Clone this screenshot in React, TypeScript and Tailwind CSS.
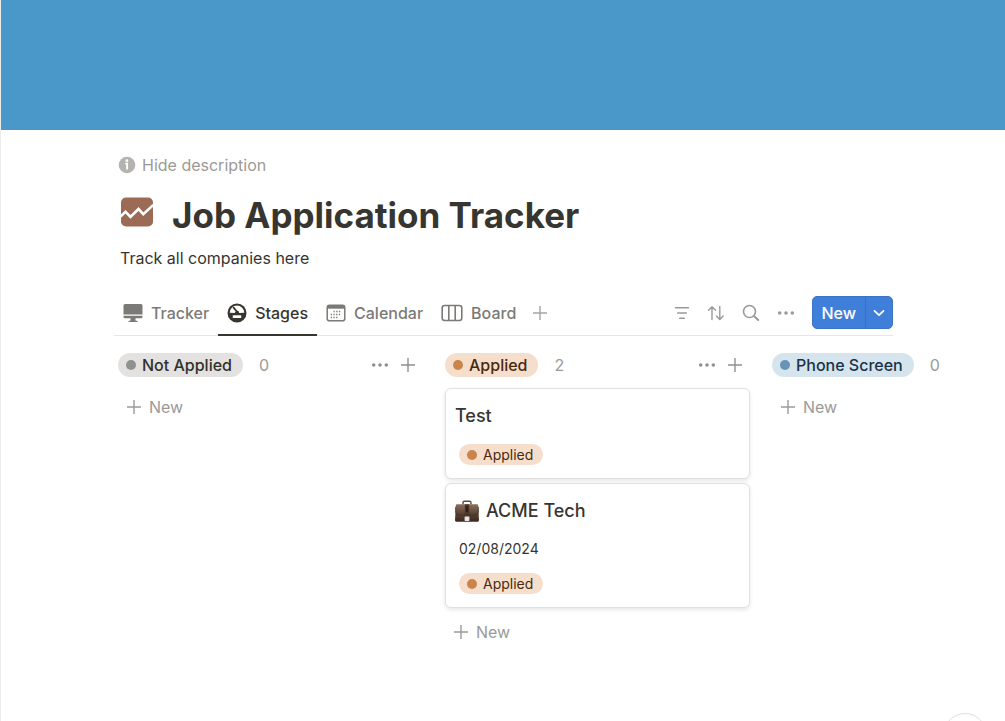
import type { ReactNode } from "react";

function Plus({ className = "size-4" }: { className?: string }) {
  return (
    <svg viewBox="0 0 16 16" className={className} fill="none" stroke="currentColor" strokeWidth="1.4" aria-hidden="true">
      <path d="M8 1v14M1 8h14" />
    </svg>
  );
}

function Dots() {
  return (
    <svg viewBox="0 0 18 6" className="h-1.5 w-4.5" fill="currentColor" aria-hidden="true">
      <circle cx="2.7" cy="3" r="1.8" />
      <circle cx="9" cy="3" r="1.8" />
      <circle cx="15.3" cy="3" r="1.8" />
    </svg>
  );
}

function InfoIcon() {
  return (
    <svg viewBox="0 0 18 18" className="size-4.5" aria-hidden="true">
      <circle cx="9" cy="9" r="8.3" fill="#b4b3b0" />
      <circle cx="8.9" cy="4.7" r="1.4" fill="#fff" />
      <path d="M7.2 7.6h1.9v6" fill="none" stroke="#fff" strokeWidth="1.9" />
    </svg>
  );
}

function ChartIcon() {
  return (
    <svg viewBox="0 0 34 30" className="h-[30px] w-[34px]" aria-hidden="true">
      <rect x="1" y="0.5" width="32" height="29" rx="5" fill="#9b6b55" />
      <path d="M0.5 19.5l5-4.7 5 5.2 8-8 4.8 5.2 10-9.2" fill="none" stroke="#fff" strokeWidth="2.6" />
    </svg>
  );
}

function MonitorIcon() {
  return (
    <svg viewBox="0 0 20 20" className="size-5" fill="currentColor" aria-hidden="true">
      <path d="M2 1h16a1.5 1.5 0 0 1 1.5 1.5V11.500H.5V2.500A1.5 1.5 0 0 1 2 1z" />
      <path d="M.5 12.700h19v1a1.5 1.5 0 0 1-1.5 1.5h-5.500v2.200l2 .6v1H5.500v-1l2-.6v-2.200H2a1.5 1.5 0 0 1-1.5-1.5z" />
    </svg>
  );
}

function GaugeIcon() {
  return (
    <svg viewBox="0 0 20 20" className="size-5" aria-hidden="true">
      <circle cx="10" cy="10" r="9.5" fill="currentColor" />
      <path d="M2.7 9.8a7.3 7.3 0 0 1 14.6 0l-5 .1a2.4 2.4 0 0 0-4.6 0z" fill="#fff" />
      <path d="M6.6 4.6l4.2 5.2" stroke="currentColor" strokeWidth="1.7" strokeLinecap="round" />
      <circle cx="10.3" cy="9.5" r="1.7" fill="currentColor" />
      <rect x="5.7" y="12.2" width="8.6" height="2.8" rx=".7" fill="#fff" />
    </svg>
  );
}

function CalendarIcon() {
  return (
    <svg viewBox="0 0 20 18" className="h-4.5 w-5" fill="none" stroke="currentColor" aria-hidden="true">
      <rect x="1.2" y="1.2" width="17.6" height="15.6" rx="2.4" strokeWidth="1.5" />
      <path d="M1.2 3.2h17.6" strokeWidth="3" />
      <path d="M7.5 7.5h8M4.7 10.5h10.8M4.7 13.5h8" strokeWidth="1.3" strokeDasharray="1.3 1.4" />
    </svg>
  );
}

function BoardIcon() {
  return (
    <svg viewBox="0 0 22 18" className="h-4.5 w-5.5" fill="none" stroke="currentColor" strokeWidth="1.6" aria-hidden="true">
      <rect x="1.2" y="1.5" width="19.6" height="15" rx="2.5" />
      <path d="M7.8 1.5v15M14.2 1.5v15" />
    </svg>
  );
}

function FilterIcon() {
  return (
    <svg viewBox="0 0 16 14" className="h-3.5 w-4" fill="none" stroke="currentColor" strokeWidth="1.5" strokeLinecap="round" aria-hidden="true">
      <path d="M1.5 1.8h13M3.7 7h8.6M5.7 12.2h4.6" />
    </svg>
  );
}

function SortIcon() {
  return (
    <svg viewBox="0 0 18 16" className="h-4 w-4.5" fill="none" stroke="currentColor" strokeWidth="1.4" strokeLinecap="round" strokeLinejoin="round" aria-hidden="true">
      <path d="M5 14.5V2M1.5 5.2L5 1.7l3.5 3.5M12.8 1.5v12.8M9.5 11l3.300 3.500 3.300-3.500" />
    </svg>
  );
}

function SearchIcon() {
  return (
    <svg viewBox="0 0 18 18" className="size-4.5" fill="none" stroke="currentColor" strokeLinecap="round" aria-hidden="true">
      <circle cx="7.5" cy="7.5" r="6" strokeWidth="1.6" />
      <path d="M12.2 12.2l4 3.800" strokeWidth="2" />
    </svg>
  );
}

function BriefcaseIcon() {
  return (
    <svg viewBox="0 0 24 22" className="h-[22px] w-6 shrink-0" aria-hidden="true">
      <defs>
        <linearGradient id="leather" x1="0" y1="0" x2="0" y2="1">
          <stop offset="0" stopColor="#8c6f5b" />
          <stop offset="0.5" stopColor="#5e4636" />
          <stop offset="1" stopColor="#3b291f" />
        </linearGradient>
      </defs>
      <path d="M8 4.5V2.8Q8 1.2 9.5 1.2h5Q16 1.2 16 2.8v1.7" fill="none" stroke="#5d4a3d" strokeWidth="1.4" />
      <path d="M2 4.3h20q1 0 1.200 1l.8 15q0 1.400-1.200 1.400H1.200Q0 21.700 0 20.300l.8-15q.2-1 1.200-1z" fill="url(#leather)" />
      <path d="M.6 7v5q.4 3 3.400 3h16q3 0 3.400-3V7" fill="none" stroke="#3b2a20" strokeWidth=".7" />
      <path d="M9.8 4.3h4.4V17H9.8z" fill="#4a372b" />
      <path d="M10.800 6h2.400v6h-2.400z" fill="#2e211a" />
      <rect x="9.6" y="16.5" width="4.8" height="4.4" rx=".6" fill="#e9e6e3" />
    </svg>
  );
}

type Tone = "gray" | "orange" | "blue";

const toneClasses: Record<Tone, { chip: string; dot: string }> = {
  gray: { chip: "bg-[#e3e2e0] text-[#32302c]", dot: "bg-[#91918e]" },
  orange: { chip: "bg-[#f5dfcc] text-[#49290e]", dot: "bg-[#cb844b]" },
  blue: { chip: "bg-[#d6e4ee] text-[#183347]", dot: "bg-[#6793b9]" },
};

function Chip({ tone, label, small = false }: { tone: Tone; label: string; small?: boolean }) {
  const size = small ? "h-[21px] pl-2 pr-2.5 gap-1.5 text-sm" : "h-6 pl-2 pr-[11px] gap-1.5 text-base font-medium";
  return (
    <span className={`inline-flex items-center rounded-full whitespace-nowrap ${size} ${toneClasses[tone].chip}`}>
      <span className={`size-2.5 rounded-full ${toneClasses[tone].dot}`} />
      {label}
    </span>
  );
}

function NewItem() {
  return (
    <button className="flex h-10 items-center gap-[7px] pl-2 text-base text-[#9b9a97]">
      <Plus />
      New
    </button>
  );
}

function Column({ tone, label, count, children }: { tone: Tone; label: string; count: number; children?: ReactNode }) {
  return (
    <section className="w-[305px] shrink-0">
      <header className="flex h-6 items-center">
        <h2 className="flex">
          <Chip tone={tone} label={label} />
        </h2>
        <span className="ml-4 text-base text-[#9b9a97]">{count}</span>
        <div className="mr-[7px] ml-auto flex items-center gap-[11px] text-[#91908d]">
          <button aria-label={`${label} options`}>
            <Dots />
          </button>
          <button aria-label={`Add to ${label}`}>
            <Plus />
          </button>
        </div>
      </header>
      {children}
      <div className={children ? "mt-1" : "mt-2.5"}>
        <NewItem />
      </div>
    </section>
  );
}

function Card({ title, icon, date }: { title: string; icon?: ReactNode; date?: string }) {
  return (
    <article className="rounded-md border border-[#e0e0df] bg-white px-[9px] py-[13px] shadow-[0_2px_4px_rgba(15,15,15,0.1)]">
      <h3 className="flex h-7 items-center gap-[7px] text-lg font-medium text-[#37352f]">
        {icon}
        {title}
      </h3>
      {date && <p className="mt-3.5 pl-1 text-sm leading-5 text-[#37352f]">{date}</p>}
      <div className="mt-3.5 flex pl-1">
        <Chip tone="orange" label="Applied" small />
      </div>
    </article>
  );
}

function Tab({ icon, label, active = false }: { icon: ReactNode; label: string; active?: boolean }) {
  return (
    <button
      role="tab"
      aria-selected={active}
      className={`-mb-px flex h-[46px] items-center gap-2 border-b-2 px-[9px] pt-0.5 text-base font-medium ${
        active ? "border-[#37352f] text-[#37352f]" : "border-transparent text-[#7b7a76]"
      }`}
    >
      {icon}
      {label}
    </button>
  );
}

export default function App() {
  return (
    <div className="relative min-h-screen overflow-hidden border-l border-[#ededec] bg-white font-['Inter',sans-serif]">
      <div className="h-[130px] bg-[#4a97ca]" />
      <main className="pl-[117px]">
        <button className="mt-[25px] flex h-5 items-center gap-1.5 text-base text-[#9b9a97]">
          <InfoIcon />
          Hide description
        </button>
        <div className="mt-4 flex h-12 items-center gap-[18px] pl-0.5">
          <span className="-mt-1.5">
            <ChartIcon />
          </span>
          <h1 className="text-[35px] leading-12 font-bold text-[#37352f]">Job Application Tracker</h1>
        </div>
        <p className="mt-[7px] pl-0.5 text-base text-[#37352f]">Track all companies here</p>

        <div className="mt-5 mr-28 -ml-1 flex h-[46px] items-center justify-between border-b border-[#e6e6e5]">
          <div role="tablist" className="flex items-center">
            <Tab icon={<MonitorIcon />} label="Tracker" />
            <Tab icon={<GaugeIcon />} label="Stages" active />
            <Tab icon={<CalendarIcon />} label="Calendar" />
            <Tab icon={<BoardIcon />} label="Board" />
            <button aria-label="Add view" className="ml-[7px] text-[#a5a4a1]">
              <Plus />
            </button>
          </div>
          <div className="flex items-center gap-[17px] text-[#9b9a97]">
            <button aria-label="Filter">
              <FilterIcon />
            </button>
            <button aria-label="Sort">
              <SortIcon />
            </button>
            <button aria-label="Search">
              <SearchIcon />
            </button>
            <button aria-label="More options">
              <Dots />
            </button>
            <div className="flex h-[33px] overflow-hidden rounded-[5px] border border-[#3c74c6] bg-[#407fd9] text-white">
              <button className="px-[9px] text-base font-medium">New</button>
              <button aria-label="New from template" className="flex w-[27px] items-center justify-center border-l border-[#3970c2]">
                <svg viewBox="0 0 12 8" className="h-2 w-3" fill="none" stroke="currentColor" strokeWidth="1.7" strokeLinecap="round" strokeLinejoin="round" aria-hidden="true">
                  <path d="M1.5 1.8L6 6.200l4.500-4.400" />
                </svg>
              </button>
            </div>
          </div>
        </div>

        <div className="mt-[17px] flex gap-[22px]">
          <Column tone="gray" label="Not Applied" count={0} />
          <Column tone="orange" label="Applied" count={2}>
            <div className="mt-[11px] flex flex-col gap-1">
              <Card title="Test" />
              <Card title="ACME Tech" icon={<BriefcaseIcon />} date="02/08/2024" />
            </div>
          </Column>
          <Column tone="blue" label="Phone Screen" count={0} />
        </div>
      </main>
      <button aria-label="Help" className="fixed right-[18px] -bottom-9 size-11 rounded-full border border-[#dededd] bg-white" />
    </div>
  );
}
